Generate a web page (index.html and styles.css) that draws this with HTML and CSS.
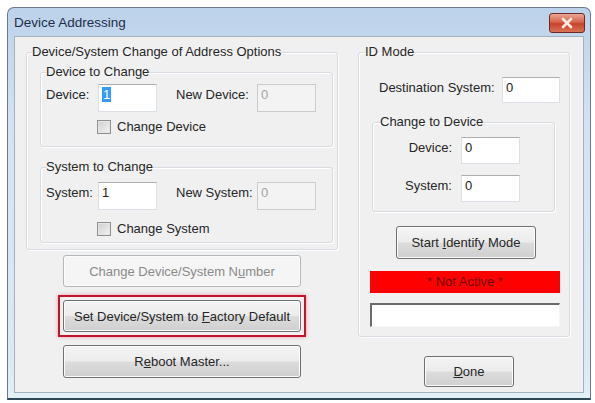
FILE: index.html
```html
<!DOCTYPE html>
<html lang="en">
<head>
    <meta charset="UTF-8">
    <meta name="viewport" content="width=device-width, initial-scale=1.0">
    <title>Device Addressing</title>
    <link rel="stylesheet" href="styles.css">
</head>
<body>

<div class="window">
    <div class="titlebar">
        <span class="title">Device Addressing</span>
        <span class="close">
            <svg width="14" height="12" viewBox="0 0 14 12">
                <path d="M3 2 L11 10 M11 2 L3 10" stroke="#fbe9e4" stroke-width="2.6" stroke-linecap="round"/>
            </svg>
        </span>
    </div>

    <div class="client">
        <div class="left-col">
            <fieldset class="group options">
                <legend>Device/System Change of Address Options</legend>

                <fieldset class="group sub">
                    <legend>Device to Change</legend>
                    <div class="field-row">
                        <span class="label">Device:</span>
                        <span class="textbox"><span class="selected">1</span></span>
                        <span class="label new-label">New Device:</span>
                        <span class="textbox disabled">0</span>
                    </div>
                    <div class="check-row">
                        <span class="checkbox"></span>
                        <span>Change Device</span>
                    </div>
                </fieldset>

                <fieldset class="group sub">
                    <legend>System to Change</legend>
                    <div class="field-row">
                        <span class="label">System:</span>
                        <span class="textbox">1</span>
                        <span class="label new-label">New System:</span>
                        <span class="textbox disabled">0</span>
                    </div>
                    <div class="check-row">
                        <span class="checkbox"></span>
                        <span>Change System</span>
                    </div>
                </fieldset>
            </fieldset>

            <button class="btn wide" disabled>Change Device/System N<u>u</u>mber</button>
            <div class="highlight">
                <button class="btn wide">Set Device/System to <u>F</u>actory Default</button>
            </div>
            <button class="btn wide">R<u>e</u>boot Master...</button>
        </div>

        <div class="right-col">
            <fieldset class="group id-mode">
                <legend>ID Mode</legend>
                <div class="dest-row">
                    <span class="dest-label">Destination System:</span>
                    <span class="textbox short">0</span>
                </div>

                <fieldset class="group sub change-to">
                    <legend>Change to Device</legend>
                    <div class="pair-row">
                        <span class="pair-label">Device:</span>
                        <span class="textbox">0</span>
                    </div>
                    <div class="pair-row">
                        <span class="pair-label">System:</span>
                        <span class="textbox">0</span>
                    </div>
                </fieldset>

                <button class="btn identify">Start <u>I</u>dentify Mode</button>
                <div class="status">* Not Active *</div>
                <div class="status-box"></div>
            </fieldset>

            <button class="btn done"><u>D</u>one</button>
        </div>
    </div>
</div>

</body>
</html>
```

FILE: styles.css
```css
/* General Styles */
body {
    margin: 0;
    background: #ffffff;
    font-family: "Liberation Sans", Arial, sans-serif;
    font-size: 13px;
    color: #262626;
}

/* Window frame */
.window {
    width: 584px;
    height: 393px;
    margin: 7px 0 0 7px;
    box-sizing: border-box;
    border: 1px solid #6a7a8a;
    border-bottom: 2px solid #2c4856;
    border-radius: 7px 7px 0 0;
    background: linear-gradient(#bcd2ea, #d4e3f3 30%, #dbe9f4 90%, #e2f1f6);
}

.titlebar {
    height: 28px;
    display: flex;
    align-items: flex-start;
}

.title {
    margin: 7px 0 0 6px;
    font-size: 13.5px;
    line-height: 16px;
    color: #1d2d4c;
}

.close {
    margin: 5px 5px 0 auto;
    width: 36px;
    height: 20px;
    box-sizing: border-box;
    border: 1px solid #6e2b22;
    border-radius: 3px;
    background: linear-gradient(#e9a796, #d9634a 45%, #c8432b 55%, #d87358);
    display: flex;
    align-items: center;
    justify-content: center;
}

.client {
    height: 357px;
    margin: 0 6px;
    box-sizing: border-box;
    border: 1px solid #a3b1bf;
    background: #f0f0f0;
    padding: 7px 12px 0 11px;
    display: flex;
    gap: 20px;
}

/* Group boxes */
.group {
    margin: 0;
    min-width: 0;
    border: 1px solid #d5dbe0;
    border-radius: 3px;
    box-shadow: 1px 1px 0 #ffffff, inset 1px 1px 0 #ffffff;
}

.group legend {
    padding: 0;
    line-height: 16px;
}

.left-col {
    width: 312px;
    display: flex;
    flex-direction: column;
    align-items: center;
}

.options {
    width: 312px;
    box-sizing: border-box;
    padding: 0 4px 6px 5px;
}

.sub {
    margin: 4px 0 0 8px;
    padding: 4px 4px 12px 5px;
}

.sub + .sub {
    margin-top: 12px;
    padding-top: 7px;
    padding-bottom: 6px;
}

.field-row {
    display: flex;
    align-items: flex-start;
}

.label {
    width: 52px;
    line-height: 22px;
}

.new-label {
    width: 81px;
    margin-left: 19px;
}

.textbox {
    width: 59px;
    height: 28px;
    box-sizing: border-box;
    padding: 2px 3px;
    line-height: 16px;
    background: #ffffff;
    border: 1px solid #dbe0e6;
    border-top-color: #abadb3;
    color: #222222;
}

.textbox.disabled {
    background: #f3f3f3;
    border-color: #c9cbcf;
    color: #a4a4a4;
}

.selected {
    background: #3399ff;
    color: #ffffff;
    padding: 0 1px;
}

.check-row {
    display: flex;
    align-items: center;
    gap: 6px;
    margin: 7px 0 0 51px;
    height: 15px;
}

.sub + .sub .check-row {
    margin-top: 11px;
}

.checkbox {
    width: 14px;
    height: 14px;
    box-sizing: border-box;
    border: 1px solid #8f8f8f;
    background: linear-gradient(135deg, #cfcfcf, #f2f2f2);
    box-shadow: inset 0 0 0 1px #e6e6e6;
}

/* Buttons */
.btn {
    font-family: inherit;
    font-size: 13px;
    color: #262626;
    border: 1px solid #707070;
    border-radius: 3px;
    background: linear-gradient(#f4f4f4, #ececec 48%, #dcdcdc 52%, #cfcfcf);
    box-shadow: inset 0 0 0 1px #fbfbfb;
    padding: 0;
    cursor: pointer;
}

.btn:disabled {
    border-color: #b4b8bb;
    background: #f5f5f5;
    color: #8a8a8a;
    cursor: default;
}

.wide {
    width: 238px;
    height: 32px;
}

.left-col > .wide:first-of-type {
    margin-top: 5px;
}

.highlight {
    margin-top: 8px;
    padding: 3px;
    border: 2px solid #c4132c;
    box-shadow: 0 0 4px rgba(200, 20, 40, 0.35);
    display: flex;
}

.highlight + .wide {
    margin-top: 8px;
    height: 33px;
}

/* ID Mode column */
.right-col {
    width: 212px;
    display: flex;
    flex-direction: column;
}

.id-mode {
    width: 212px;
    box-sizing: border-box;
    padding: 0 0 9px 6px;
    display: flex;
    flex-direction: column;
}

.dest-row {
    display: flex;
    align-items: flex-start;
    margin: 17px 0 0 14px;
}

.dest-label {
    width: 123px;
    line-height: 22px;
}

.short {
    width: 58px;
    height: 26px;
}

.change-to {
    width: 183px;
    box-sizing: border-box;
    margin: 11px 0 0 7px;
    padding: 7px 0 9px 7px;
}

.pair-row {
    display: flex;
    align-items: flex-start;
}

.pair-row + .pair-row {
    margin-top: 11px;
}

.pair-label {
    width: 72px;
    margin-right: 9px;
    text-align: right;
    line-height: 22px;
}

.pair-row .textbox {
    height: 27px;
}

.identify {
    width: 140px;
    height: 33px;
    margin: 14px 0 0 31px;
}

.status {
    width: 190px;
    height: 22px;
    margin: 12px 0 0 5px;
    background: #ff0000;
    color: #700000;
    text-align: center;
    line-height: 22px;
}

.status-box {
    width: 190px;
    height: 24px;
    box-sizing: border-box;
    margin: 10px 0 0 5px;
    background: #ffffff;
    border-top: 2px solid #6b6b6b;
    border-left: 2px solid #6b6b6b;
    border-right: 1px solid #f6f6f6;
    border-bottom: 1px solid #f6f6f6;
}

.done {
    width: 90px;
    height: 31px;
    margin: 19px 0 0 66px;
}
```
